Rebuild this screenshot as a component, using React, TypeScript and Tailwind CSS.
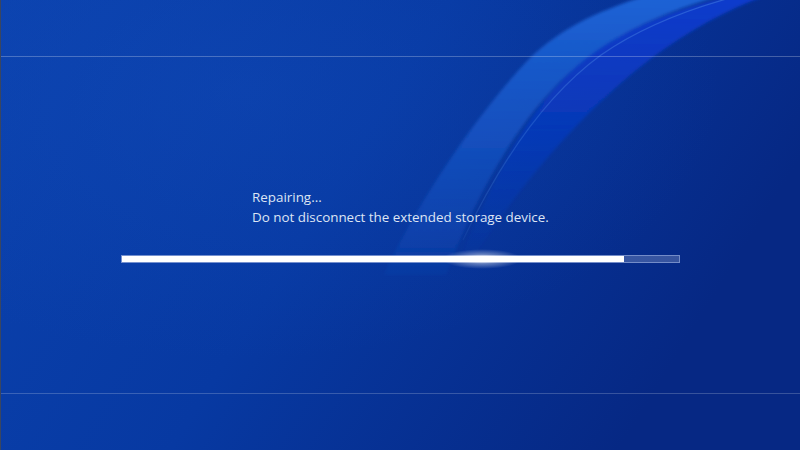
import React from "react";

function Backdrop() {
  return (
    <svg className="absolute inset-0" width="800" height="450" viewBox="0 0 800 450">
      <defs>
        <linearGradient id="bg" x1="0" y1="0" x2="1" y2="0.35">
          <stop offset="0" stopColor="#0b42ae" />
          <stop offset="0.5" stopColor="#0739a2" />
          <stop offset="1" stopColor="#062884" />
        </linearGradient>
        <radialGradient id="glowTL" cx="0.3" cy="0.2" r="0.6">
          <stop offset="0" stopColor="#1550c0" stopOpacity="0.3" />
          <stop offset="1" stopColor="#1550c0" stopOpacity="0" />
        </radialGradient>
        <linearGradient id="darkBand" x1="0" y1="0" x2="0" y2="450" gradientUnits="userSpaceOnUse">
          <stop offset="0" stopColor="#0a3bcc" stopOpacity="1" />
          <stop offset="0.3" stopColor="#0a3bcc" stopOpacity="0.55" />
          <stop offset="0.58" stopColor="#0a3bcc" stopOpacity="0" />
        </linearGradient>
        <linearGradient id="lb" x1="0" y1="0" x2="0" y2="450" gradientUnits="userSpaceOnUse">
          <stop offset="0" stopColor="#1e67dc" stopOpacity="0.9" />
          <stop offset="0.3" stopColor="#1a5ed2" stopOpacity="0.6" />
          <stop offset="0.5" stopColor="#1858cc" stopOpacity="0.32" />
          <stop offset="0.66" stopColor="#1858cc" stopOpacity="0" />
        </linearGradient>
        <linearGradient id="hl" x1="0" y1="0" x2="0" y2="450" gradientUnits="userSpaceOnUse">
          <stop offset="0" stopColor="#5fa0f0" stopOpacity="0.35" />
          <stop offset="0.45" stopColor="#5fa0f0" stopOpacity="0.18" />
          <stop offset="0.6" stopColor="#5fa0f0" stopOpacity="0" />
        </linearGradient>
        <filter id="soft" x="-10%" y="-10%" width="120%" height="120%">
          <feGaussianBlur stdDeviation="1.6" />
        </filter>
      </defs>
      <rect width="800" height="450" fill="url(#bg)" />
      <rect width="800" height="450" fill="url(#glowTL)" />
      <g filter="url(#soft)">
        <path
          d="M 587 57 C 630 25 680 5 780 -15 L 800 -15 C 745 -2 695 26 652 57 C 585 108 522 180 472 258 L 455 270 C 490 180 530 100 587 57 Z"
          fill="url(#darkBand)"
        />
        <path
          d="M 383 275 C 400 235 460 130 530 57 C 565 25 600 8 680 -15 L 760 -15 C 680 5 630 25 587 57 C 530 100 480 180 445 275 Z"
          fill="url(#lb)"
        />
      </g>
      <path
        d="M 462 240 C 500 160 545 95 600 55 C 640 27 690 8 740 -5"
        stroke="url(#hl)"
        strokeWidth="1.2"
        fill="none"
      />
    </svg>
  );
}

export default function App() {
  return (
    <div className="relative w-[800px] h-[450px] overflow-hidden bg-[#0739a2] border-l border-[#3a4660]">
      <Backdrop />
      <div className="relative flex flex-col h-full">
        <div className="h-[57px] shrink-0 border-b border-white/25" />
        <div className="flex-1 flex flex-col pl-[120px] pt-[130px]">
          <div
            className="ml-[131px] text-[13.4px] leading-[20px] text-[#dde5f4]"
            style={{ fontFamily: '"Open Sans", "Noto Sans", sans-serif' }}
          >
            <div>Repairing...</div>
            <div>Do not disconnect the extended storage device.</div>
          </div>
          <div className="relative mt-[28px] w-[559px] h-[8px] flex border border-[#8fa4d8]/70 bg-white/20">
            <div className="w-[502px] h-full bg-white" />
            <div className="absolute left-[320px] top-[-7px] w-[80px] h-[20px] rounded-full bg-[radial-gradient(ellipse_at_center,rgba(255,255,255,0.9)_0%,rgba(255,255,255,0.35)_35%,rgba(255,255,255,0)_70%)]" />
          </div>
        </div>
        <div className="h-[57px] shrink-0 border-t border-white/20" />
      </div>
    </div>
  );
}
